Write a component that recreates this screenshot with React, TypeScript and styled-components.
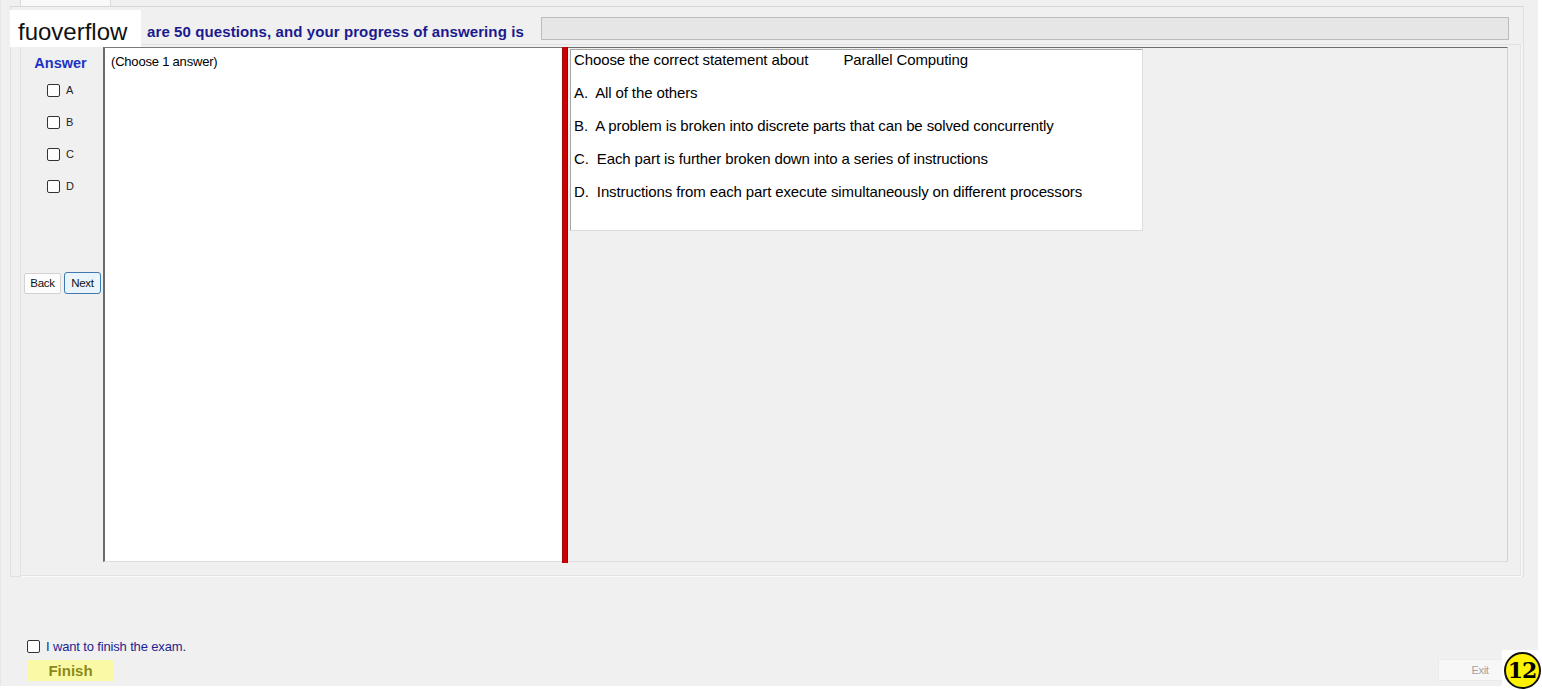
import React from "react";
import styled, { createGlobalStyle } from "styled-components";

const GlobalStyle = createGlobalStyle`
  html, body { margin: 0; padding: 0; background: #ffffff; }
  body { font-family: "Liberation Sans", Arial, sans-serif; color: #000; }
  * { box-sizing: border-box; }
`;

const Page = styled.div`
  position: relative;
  width: 1542px;
  height: 690px;
  background: #ffffff;
`;

const Window = styled.div`
  width: 1538px;
  height: 686px;
  background: #f0f0f0;
  display: flex;
  flex-direction: column;
  border-left: 1px solid #e6e6e6;
`;

const TabStrip = styled.div`
  height: 6px;
  display: flex;
  padding-left: 19px;
`;

const Tab = styled.div`
  width: 91px;
  height: 6px;
  background: #f9f9f9;
  border-left: 1px solid #d9d9d9;
  border-right: 1px solid #d9d9d9;
`;

const TabPage = styled.div`
  margin-left: 9px;
  width: 1514px;
  height: 571px;
  border: 1px solid #e0e0e0;
  border-top-color: #d6d6d6;
  display: flex;
  flex-direction: column;
`;

const Header = styled.div`
  height: 37px;
  display: flex;
  align-items: flex-start;
  padding: 10px 0 0 136px;
`;

const HeaderText = styled.div`
  flex: 0 0 394px;
  font-size: 15px;
  font-weight: bold;
  line-height: 23px;
  padding-top: 3px;
  letter-spacing: 0.1px;
  color: #1a1a8e;
  white-space: nowrap;
`;

const ProgressBar = styled.div`
  width: 968px;
  height: 23px;
  background: #e6e6e6;
  border: 1px solid #bcbcbc;
`;

const Group = styled.div`
  margin-left: 9px;
  width: 1501px;
  height: 532px;
  border: 1px solid #e2e2e2;
  box-shadow: 1px 1px 0 #fafafa;
  display: flex;
  align-items: flex-start;
  padding: 2px 12px 13px 1px;
`;

const LeftCol = styled.div`
  flex: 0 0 81px;
  display: flex;
  flex-direction: column;
`;

const AnswerLabel = styled.div`
  margin-top: 8px;
  padding-right: 4px;
  text-align: center;
  font-size: 14.5px;
  font-weight: bold;
  line-height: 16px;
  color: #1c34c4;
`;

const OptionList = styled.div`
  margin-top: 3px;
  display: flex;
  flex-direction: column;
`;

const OptionRow = styled.label`
  height: 32px;
  display: flex;
  align-items: center;
  gap: 6px;
  padding-left: 25px;
  font-size: 11px;
  color: #222;
`;

const Box = styled.span`
  width: 13px;
  height: 13px;
  border: 1px solid #333;
  border-radius: 2px;
  background: #fff;
  display: inline-block;
  flex: 0 0 13px;
`;

const NavRow = styled.div`
  margin-top: 70px;
  display: flex;
  align-items: center;
  gap: 3px;
  padding-left: 2px;
`;

const NavButton = styled.button<{ $primary?: boolean }>`
  width: 37px;
  height: ${(p) => (p.$primary ? "22px" : "21px")};
  padding: 0;
  font-family: "Liberation Sans", Arial, sans-serif;
  font-size: 11.5px;
  letter-spacing: -0.3px;
  color: #111;
  background: ${(p) => (p.$primary ? "#eaf4fc" : "#fdfdfd")};
  border: 1px solid ${(p) => (p.$primary ? "#3c7ab0" : "#d2d2d2")};
  border-radius: ${(p) => (p.$primary ? "3px" : "2px")};
`;

const AnswerPanel = styled.div`
  flex: 0 0 459px;
  height: 515px;
  background: #fff;
  border-left: 2px solid #6a6a6a;
  border-top: 1px solid #7a7a7a;
  border-bottom: 1px solid #dcdcdc;
  padding: 7px 0 0 6px;
  font-size: 13px;
  line-height: 14px;
  letter-spacing: -0.2px;
`;

const Splitter = styled.div`
  flex: 0 0 6px;
  height: 516px;
  background: #d00000;
  border-left: 1px solid #9a0a0a;
  border-right: 1px solid #a00000;
`;

const QuestionPanel = styled.div`
  flex: 1;
  height: 515px;
  border-top: 1px solid #6d6d6d;
  border-right: 1px solid #d2d2d2;
  border-bottom: 1px solid #dedede;
  padding: 1px 0 0 2px;
`;

const QuestionBox = styled.div`
  width: 573px;
  height: 182px;
  background: #fff;
  border: 1px solid #dcdcdc;
  border-top-color: #a6a6a6;
  border-left-color: #a6a6a6;
  padding: 0 3px;
  font-size: 15px;
  line-height: 20px;
  letter-spacing: -0.12px;
  display: flex;
  flex-direction: column;
  gap: 13px;
`;

const QLine = styled.div`
  white-space: pre;
`;

const Subject = styled.span`
  margin-left: 35px;
`;

const Footer = styled.div`
  flex: 1;
  display: flex;
  align-items: flex-end;
  justify-content: space-between;
  padding: 0 34px 5px 26px;
`;

const FinishCol = styled.div`
  display: flex;
  flex-direction: column;
`;

const FinishCheck = styled.label`
  display: flex;
  align-items: center;
  gap: 6px;
  height: 13px;
  margin-bottom: 7px;
  font-size: 13px;
  letter-spacing: -0.15px;
  color: #1e1e90;
`;

const FinishButton = styled.button`
  margin-left: 1px;
  width: 85px;
  height: 21px;
  padding: 0;
  border: none;
  background: #fafaa6;
  font-family: "Liberation Sans", Arial, sans-serif;
  font-size: 15px;
  font-weight: bold;
  color: #8a8a18;
`;

const ExitButton = styled.button`
  width: 66px;
  height: 22px;
  padding: 0 0 0 18px;
  background: #f7f7f7;
  border: 1px solid #ebebeb;
  font-family: "Liberation Sans", Arial, sans-serif;
  font-size: 11px;
  letter-spacing: -0.3px;
  color: #a2a2a2;
`;

const Watermark = styled.div`
  position: absolute;
  left: 10px;
  top: 10px;
  width: 131px;
  height: 37px;
  background: #fff;
  padding: 7px 0 0 8px;
  font-size: 24px;
  line-height: 30px;
  color: #111;
`;

const BadgeWrap = styled.div`
  position: absolute;
  right: 0;
  bottom: 0;
  width: 40px;
  height: 40px;
  background: #fff;
  display: flex;
  align-items: center;
  justify-content: center;
`;

const Badge = styled.div`
  width: 37px;
  height: 37px;
  border-radius: 50%;
  border: 2px solid #111;
  background: #fff200;
  display: flex;
  align-items: center;
  justify-content: center;
  font-family: "DejaVu Serif", "Liberation Serif", serif;
  font-weight: bold;
  font-size: 22px;
  color: #000;
  letter-spacing: -1px;
`;

const options = ["A", "B", "C", "D"];
const lines = [
  "A.  All of the others",
  "B.  A problem is broken into discrete parts that can be solved concurrently",
  "C.  Each part is further broken down into a series of instructions",
  "D.  Instructions from each part execute simultaneously on different processors",
];

export default function App() {
  return (
    <Page>
      <GlobalStyle />
      <Window>
        <TabStrip>
          <Tab />
        </TabStrip>
        <TabPage>
          <Header>
            <HeaderText>are 50 questions, and your progress of answering is</HeaderText>
            <ProgressBar />
          </Header>
          <Group>
            <LeftCol>
              <AnswerLabel>Answer</AnswerLabel>
              <OptionList>
                {options.map((o) => (
                  <OptionRow key={o}>
                    <Box />
                    {o}
                  </OptionRow>
                ))}
              </OptionList>
              <NavRow>
                <NavButton>Back</NavButton>
                <NavButton $primary>Next</NavButton>
              </NavRow>
            </LeftCol>
            <AnswerPanel>(Choose 1 answer)</AnswerPanel>
            <Splitter />
            <QuestionPanel>
              <QuestionBox>
                <QLine>
                  Choose the correct statement about<Subject>Parallel Computing</Subject>
                </QLine>
                {lines.map((l) => (
                  <QLine key={l}>{l}</QLine>
                ))}
              </QuestionBox>
            </QuestionPanel>
          </Group>
        </TabPage>
        <Footer>
          <FinishCol>
            <FinishCheck>
              <Box />
              I want to finish the exam.
            </FinishCheck>
            <FinishButton>Finish</FinishButton>
          </FinishCol>
          <ExitButton>Exit</ExitButton>
        </Footer>
      </Window>
      <Watermark>fuoverflow</Watermark>
      <BadgeWrap>
        <Badge>12</Badge>
      </BadgeWrap>
    </Page>
  );
}
